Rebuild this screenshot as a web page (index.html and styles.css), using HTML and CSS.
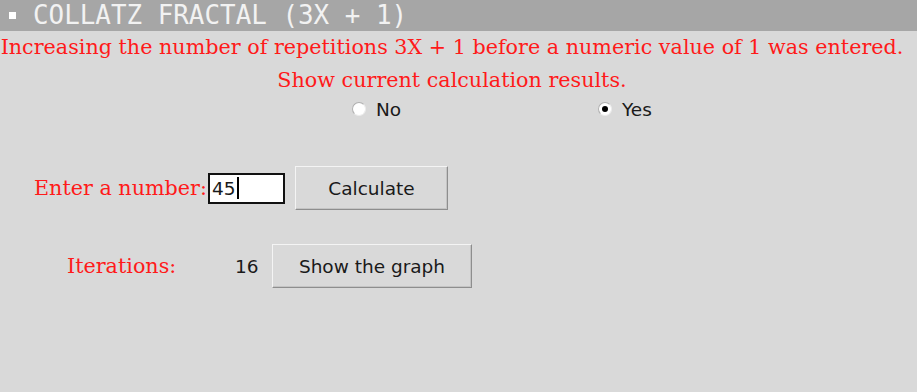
FILE: index.html
```html
<!DOCTYPE html>
<html lang="en">
  <head>
    <meta charset="UTF-8">
    <title>Collatz fractal</title>
    <link rel="stylesheet" href="styles.css">
  </head>
  <body>
    <div class="title-bar">
      <span class="title-mark"></span>
      <span class="title-text">COLLATZ FRACTAL (3X + 1)</span>
    </div>
    <div class="intro">
      <p class="note">Increasing the number of repetitions 3X + 1 before a numeric value of 1 was entered.</p>
      <p class="note">Show current calculation results.</p>
    </div>
    <div class="choice-row">
      <label class="choice choice-no"><span class="radio"></span>No</label>
      <label class="choice"><span class="radio radio-on"></span>Yes</label>
    </div>
    <div class="entry-row">
      <span class="note entry-label">Enter a number:</span>
      <span class="entry">45<span class="caret"></span></span>
      <button class="tk-button calc-button">Calculate</button>
    </div>
    <div class="result-row">
      <span class="note result-label">Iterations:</span>
      <span class="result-value">16</span>
      <button class="tk-button graph-button">Show the graph</button>
    </div>
  </body>
</html>
```

FILE: styles.css
```css
body {
  margin: 0;
  background: #d9d9d9;
  font-family: "DejaVu Sans", sans-serif;
  font-size: 18.5px;
  color: #1a1a1a;
  height: 392px;
  overflow: hidden;
}
.title-bar {
  height: 31px;
  background: #a6a6a6;
  display: flex;
  align-items: center;
}
.title-mark {
  width: 7px;
  height: 7px;
  background: #ffffff;
  margin-left: 9px;
  margin-right: 17px;
}
.title-text {
  font-family: "DejaVu Sans Mono", monospace;
  font-size: 25.9px;
  color: #f2f2f2;
  line-height: 31px;
}
.note {
  font-family: "DejaVu Serif", serif;
  font-size: 20.7px;
  color: #ff1a1a;
}
.intro {
  width: 904px;
  text-align: center;
}
.intro p {
  margin: 0;
  line-height: 33px;
}
.choice-row {
  display: flex;
  padding-left: 352px;
  height: 24px;
  align-items: center;
}
.choice {
  display: flex;
  align-items: center;
}
.choice-no {
  width: 246px;
}
.radio {
  width: 14px;
  height: 14px;
  box-sizing: border-box;
  border-radius: 50%;
  background: #ffffff;
  border: 1px solid #b0b0b0;
  border-right-color: #ececec;
  border-bottom-color: #ececec;
  margin-right: 10px;
  display: flex;
  align-items: center;
  justify-content: center;
}
.radio-on::after {
  content: "";
  width: 6px;
  height: 6px;
  border-radius: 50%;
  background: #000000;
}
.entry-row {
  display: flex;
  align-items: center;
  padding-left: 34px;
  margin-top: 45px;
  height: 44px;
}
.entry-label {
  width: 174px;
}
.entry {
  width: 77px;
  height: 31px;
  box-sizing: border-box;
  border: 2px solid #111111;
  background: #ffffff;
  display: flex;
  align-items: center;
  padding-left: 2px;
  color: #1a1a1a;
}
.caret {
  width: 2px;
  height: 22px;
  background: #000000;
  margin-left: 1px;
}
.tk-button {
  font-family: "DejaVu Sans", sans-serif;
  font-size: 18.5px;
  color: #1a1a1a;
  background: #d9d9d9;
  border: 1px solid #f4f4f4;
  border-right-color: #8e8e8e;
  border-bottom-color: #8e8e8e;
  box-shadow: inset -1px -1px 0 #c4c4c4;
  padding: 0;
}
.calc-button {
  width: 153px;
  height: 44px;
  margin-left: 10px;
}
.result-row {
  display: flex;
  align-items: center;
  padding-left: 67px;
  margin-top: 34px;
  height: 44px;
}
.result-label {
  width: 168px;
}
.result-value {
  width: 37px;
}
.graph-button {
  width: 200px;
  height: 44px;
}
```
